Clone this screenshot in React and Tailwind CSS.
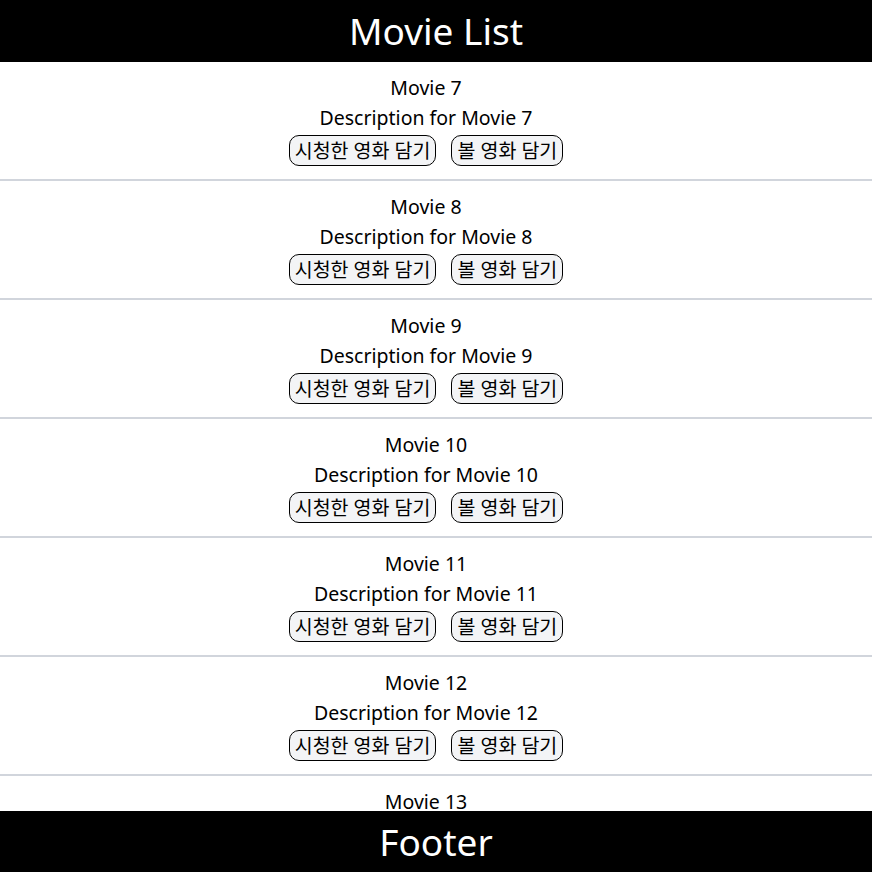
import React from 'react';

const movies = [7, 8, 9, 10, 11, 12, 13].map(n => ({
  id: n,
  title: `Movie ${n}`,
  description: `Description for Movie ${n}`,
}));

const MovieItem = ({ movie }) => (
  <div className="flex flex-col items-center border-b-2 border-gray-300 pt-[11px] pb-[13px] pr-[20px] text-[19.5px] leading-[30px]">
    <p>{movie.title}</p>
    <p>{movie.description}</p>
    <div className="flex gap-[15px] mt-[2px]">
      <button className="h-[31px] px-[5px] border border-black rounded-[10px] bg-gray-100 leading-[29px]">시청한 영화 담기</button>
      <button className="h-[31px] px-[5px] border border-black rounded-[10px] bg-gray-100 leading-[29px]">볼 영화 담기</button>
    </div>
  </div>
);

export default function App() {
  return (
    <div className="flex flex-col h-screen bg-white text-black font-['Noto_Sans','Noto_Sans_CJK_KR',sans-serif]">
      <header className="h-[62px] shrink-0 bg-black text-white flex items-center justify-center text-[37px]">
        Movie List
      </header>
      <main className="flex-1 overflow-hidden">
        {movies.map(m => (
          <MovieItem key={m.id} movie={m} />
        ))}
      </main>
      <footer className="h-[61px] shrink-0 bg-black text-white flex items-center justify-center text-[37px]">
        Footer
      </footer>
    </div>
  );
}
